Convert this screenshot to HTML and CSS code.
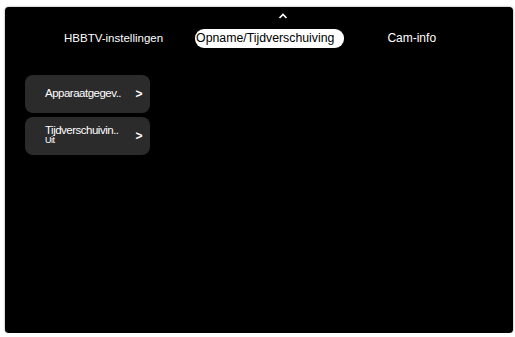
FILE: index.html
```html
<!DOCTYPE html>
<html lang="nl">
<head>
    <meta charset="UTF-8">
    <meta name="viewport" content="width=device-width, initial-scale=1.0">
    <title>Instellingen</title>

    <link rel="stylesheet" href="styles.css">

</head>
<body>
    <div class="scherm">
        <div class="pijl">
            <svg width="10" height="6" viewBox="0 0 10 6"><path d="M1.5 5 L5 1.5 L8.5 5" fill="none" stroke="#fff" stroke-width="1.6"/></svg>
        </div>
        <div class="tabs">
            <span class="tab">HBBTV-instellingen</span>
            <span class="tab actief">Opname/Tijdverschuiving</span>
            <span class="tab">Cam-info</span>
        </div>

        <div class="menu">
            <div class="item">
                <div class="tekst">Apparaatgegev..</div>
                <span class="pijltje">&gt;</span>
            </div>
            <div class="item">
                <div class="tekst">
                    Tijdverschuivin..
                    <div class="sub">Uit</div>
                </div>
                <span class="pijltje">&gt;</span>
            </div>
        </div>
    </div>
</body>
</html>
```

FILE: styles.css
```css
body
{
    margin: 0;
    background-color: #fff;
    font-family: "Liberation Sans", Arial, sans-serif;
}
.scherm
{
    margin: 7px 2px 0 5px;
    height: 326px;
    background-color: #000;
    border-radius: 4px;
    box-shadow: 0 0 2px rgba(0, 0, 0, 0.5);
    color: #fff;
    overflow: hidden;
}
.pijl
{
    display: flex;
    justify-content: center;
    padding-top: 6px;
    height: 10px;
    margin-left: 48px;
}
.tabs
{
    display: flex;
    align-items: center;
    height: 24px;
    margin-top: 3px;
    font-size: 11.5px;
}
.tab
{
    padding: 3px 6px;
    line-height: 13px;
}
.tab:nth-child(1)
{
    margin-left: 53px;
}
.tab.actief
{
    margin-left: 26px;
    padding: 3px 10px 3px 1px;
    font-size: 12.3px;
    background-color: #fff;
    color: #000;
    border-radius: 9px;
}
.tab:nth-child(3)
{
    margin-left: 37px;
    font-size: 12px;
}
.menu
{
    display: flex;
    flex-direction: column;
    gap: 4px;
    margin: 25px 0 0 20px;
    width: 125px;
}
.item
{
    display: flex;
    align-items: center;
    justify-content: space-between;
    height: 38px;
    padding: 0 8px 0 20px;
    background-color: #2b2b2b;
    border-radius: 8px;
    font-size: 11.5px;
    letter-spacing: -0.5px;
    color: #fff;
}
.tekst
{
    line-height: 11px;
    padding-bottom: 2px;
}
.sub
{
    font-size: 9px;
    line-height: 9px;
}
.pijltje
{
    font-size: 12px;
    font-weight: bold;
}
```
